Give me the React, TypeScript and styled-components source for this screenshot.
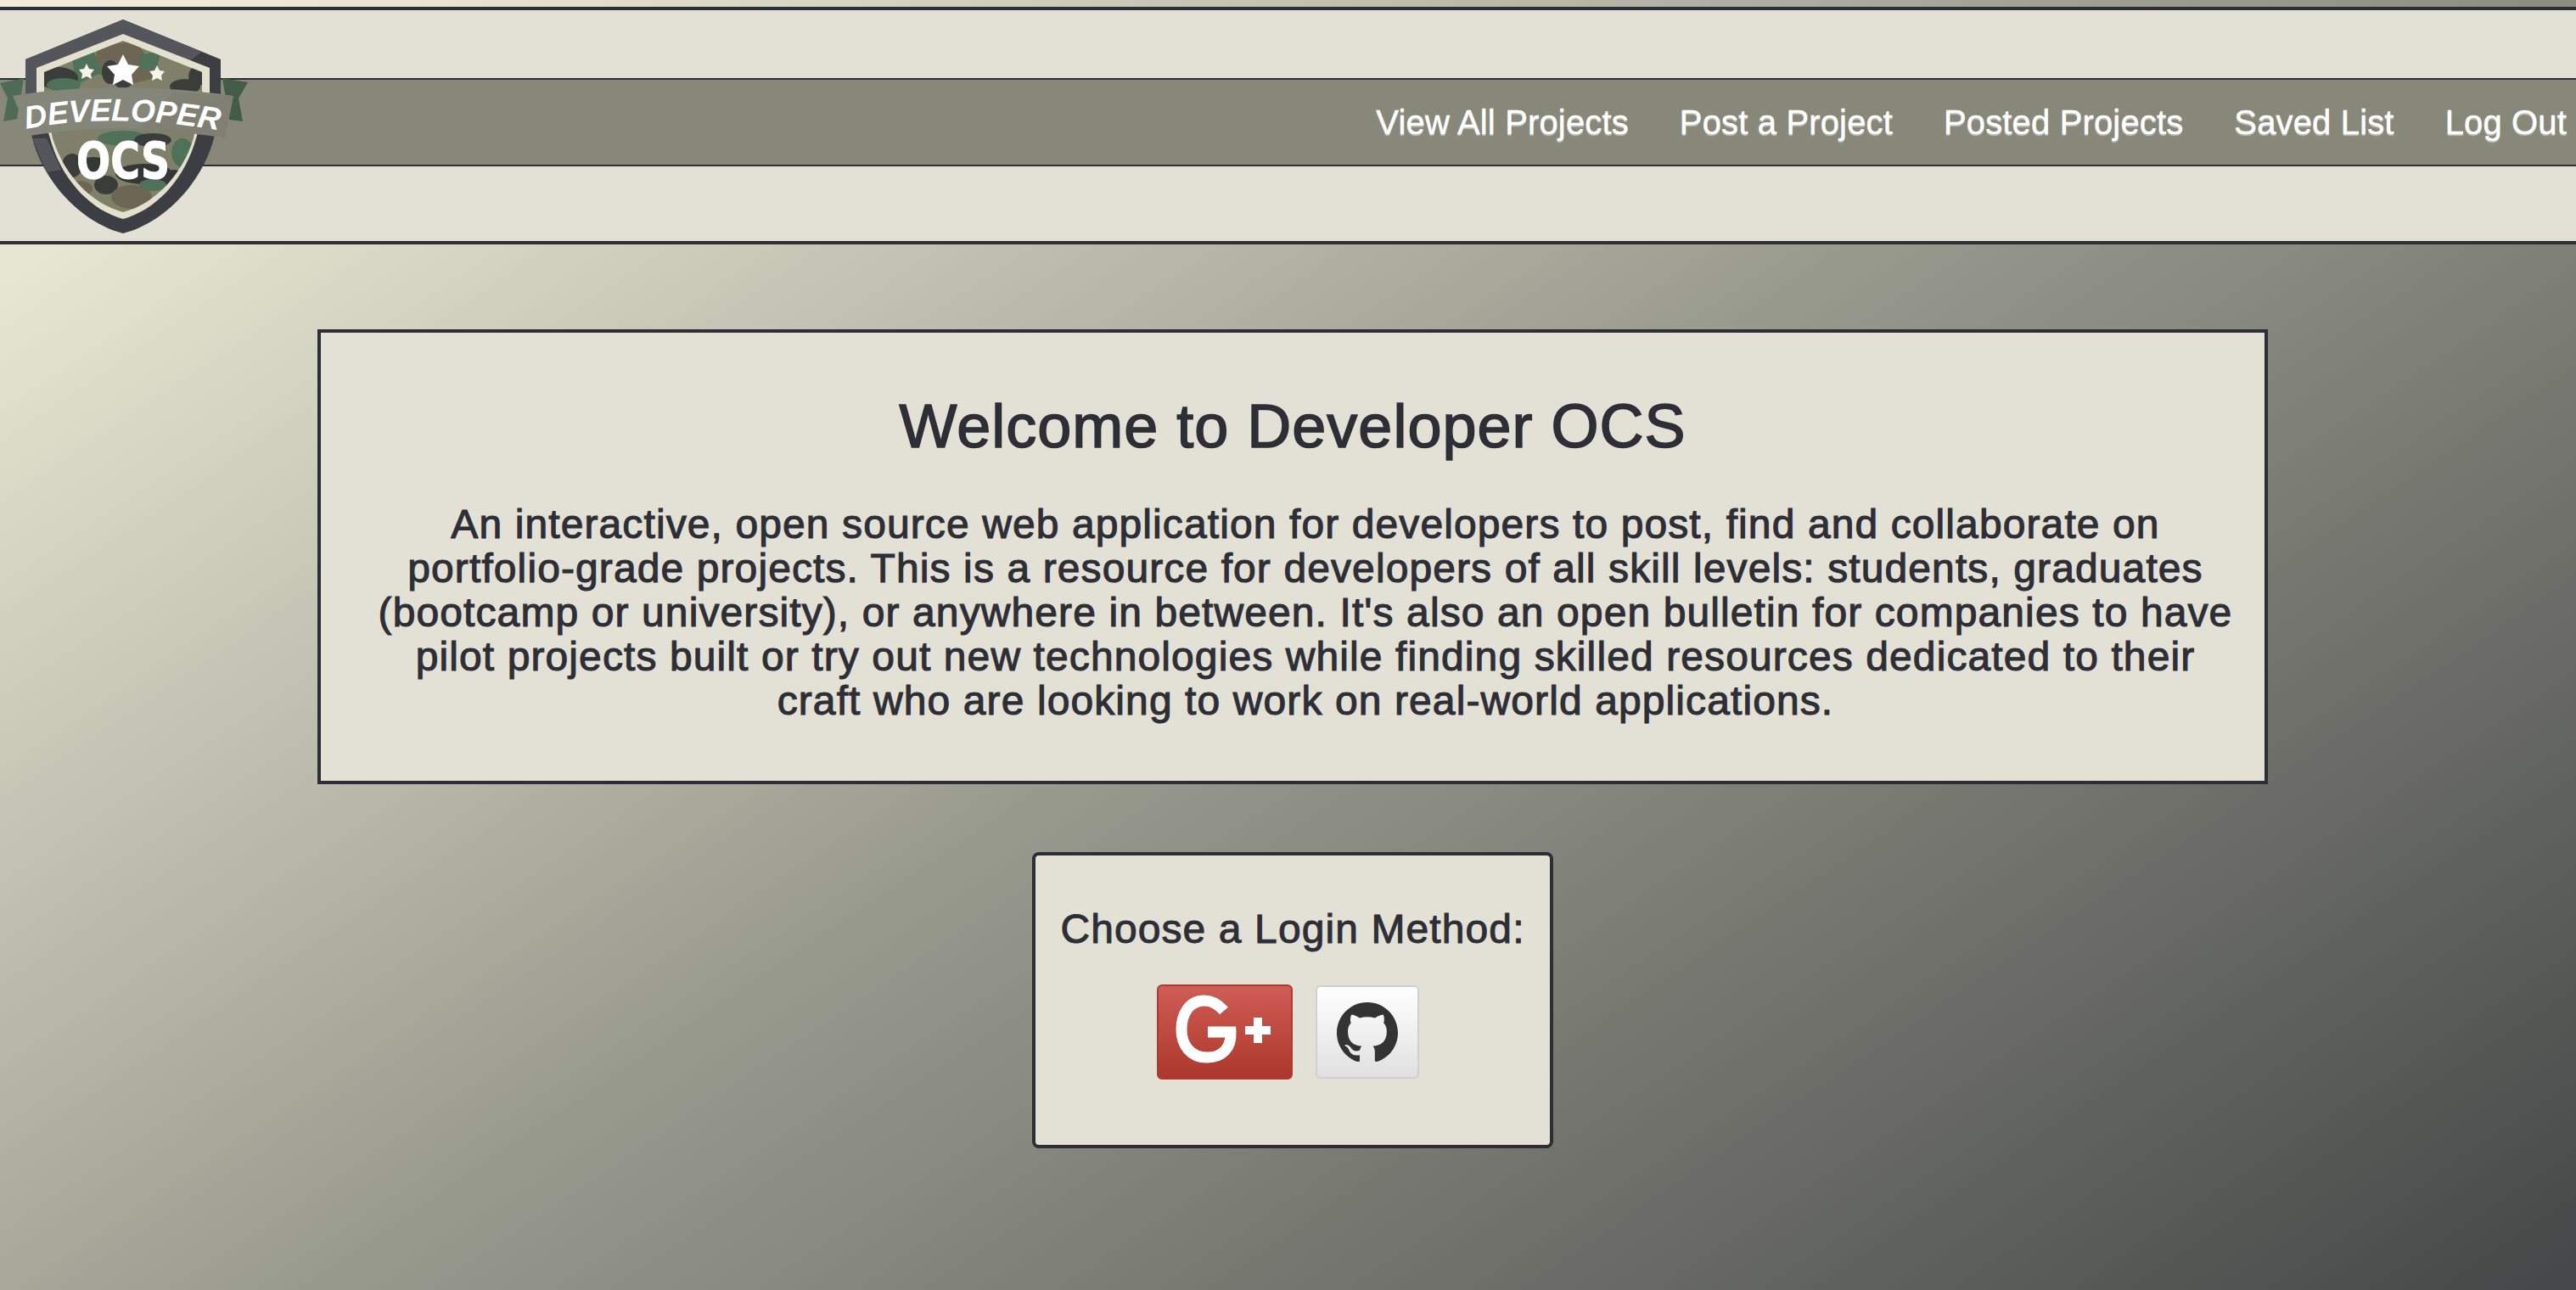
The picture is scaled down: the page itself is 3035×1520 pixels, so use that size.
import styled, { createGlobalStyle } from 'styled-components'
import { SiGithub } from 'react-icons/si'

const GlobalStyle = createGlobalStyle`
  html, body {
    margin: 0;
    padding: 0;
  }

  body {
    width: 3035px;
    height: 1520px;
    overflow: hidden;
    font-family: 'Liberation Sans', Arial, sans-serif;
    color: #2d2e36;
    background: linear-gradient(146deg, #eeeddb 0%, #e6e6d2 9.4%, #b0b1a2 38%, #9a9b8f 49%, #7a7b73 68%, #454748 100%);
  }
`

const Page = styled.div`
  position: relative;
  padding-top: 8px;
`

// top bar, the green band runs through it a little above the middle
const Header = styled.header`
  height: 280px;
  box-sizing: border-box;
  background-color: #e3e0d5;
  border-top: 4px solid #2d2e36;
  border-bottom: 4px solid #2d2e36;
  padding-top: 80px;
`

const Nav = styled.nav`
  height: 104px;
  box-sizing: border-box;
  background-color: #87887a;
  border-top: 2px solid #2d2e36;
  border-bottom: 2px solid #2d2e36;
  padding-right: 11px;
  display: flex;
  align-items: center;
  justify-content: flex-end;
  gap: 60px;
`

const NavLink = styled.a`
  color: #ffffff;
  font-size: 40px;
  line-height: 48px;
  letter-spacing: 0.15px;
  -webkit-text-stroke: 0.4px #ffffff;
  text-shadow: 0 2px 1px rgba(255, 255, 255, 0.45);
  cursor: pointer;
`

// sits over the header, overlapping the band
const LogoWrap = styled.div`
  position: absolute;
  top: 0;
  left: 0;
  width: 300px;
  height: 290px;
`

const Main = styled.main`
  display: flex;
  flex-direction: column;
  align-items: center;
  padding: 100px 0 0 11px;
`

const WelcomeBox = styled.section`
  width: 2298px;
  height: 536px;
  box-sizing: border-box;
  background-color: #e3e0d5;
  border: 4px solid #2d2e36;
  padding: 68px 0 0;
  text-align: center;
`

const Title = styled.h1`
  margin: 0 0 48px;
  font-size: 72px;
  line-height: 84px;
  font-weight: 400;
  letter-spacing: 1px;
  -webkit-text-stroke: 1.6px #2d2e36;
`

// the paragraph sits a bit right of the box centre in the original
const Intro = styled.p`
  margin: 0;
  padding: 0 37px 0 67px;
  font-size: 48px;
  line-height: 52px;
  letter-spacing: 1.1px;
  -webkit-text-stroke: 1.1px #2d2e36;
`

const LoginBox = styled.section`
  margin-top: 80px;
  width: 614px;
  height: 349px;
  box-sizing: border-box;
  background-color: #e3e0d5;
  border: 4px solid #2d2e36;
  border-radius: 8px;
  padding-top: 58px;
  display: flex;
  flex-direction: column;
  align-items: center;
`

const LoginTitle = styled.h2`
  margin: 0 0 36px;
  font-size: 48px;
  line-height: 58px;
  font-weight: 400;
  letter-spacing: 1.1px;
  white-space: nowrap;
  -webkit-text-stroke: 1px #2d2e36;
`

const LoginButtons = styled.div`
  display: flex;
  align-items: center;
  gap: 27px;
  padding-right: 12px;
`

const GoogleButton = styled.button`
  width: 160px;
  height: 112px;
  padding: 0;
  box-sizing: border-box;
  border: 2px solid #ad3a30;
  border-radius: 6px;
  background: linear-gradient(to bottom, #ce5d55, #ad372c);
  cursor: pointer;
  display: flex;

  svg {
    display: block;
  }
`

const GithubButton = styled.button`
  width: 122px;
  height: 110px;
  padding: 0;
  box-sizing: border-box;
  border: 2px solid #d0d0d0;
  border-radius: 6px;
  background: linear-gradient(to bottom, #ffffff, #e0e0e0);
  color: #333333;
  cursor: pointer;
  display: flex;
  align-items: center;
  justify-content: center;
`

const Logo = () => (
  <svg width="300" height="290" viewBox="0 0 300 290">
    <defs>
      <clipPath id="camoClip">
        <path d="M145 48 L238 85 L238 112 L228 163 C214 207 182 240 145 250 C108 240 76 207 62 163 L52 112 L52 85 Z" />
      </clipPath>
    </defs>
    {/* ribbon tails */}
    <path d="M0 98 L28 92 L20 140 L4 143 L9 116 Z" fill="#4d6b55" />
    <path d="M262 92 L292 97 L281 116 L286 143 L270 141 Z" fill="#435c48" />
    {/* shield */}
    <path d="M145 23 L260 70 L260 112 L252 163 C238 215 195 262 145 275 C95 262 52 215 38 163 L30 112 L30 70 Z" fill="#3d3e44" />
    <path d="M145 23 L238 61 L222 73 L145 40 L43 80 L43 112 L30 112 L30 70 Z" fill="#55555c" />
    <path d="M38 163 L55 163 L72 200 L55 203 Z" fill="#55555c" />
    <path d="M145 40 L247 80 L247 112 L231 163 C218 210 185 247 145 258 C105 247 72 210 59 163 L43 112 L43 80 Z" fill="#e3e0cf" />
    <g clipPath="url(#camoClip)">
      <rect x="40" y="40" width="210" height="220" fill="#7f8069" />
      <path d="M115 55 L160 48 L190 90 L150 100 L110 85 Z" fill="#6e6655" />
      <path d="M85 70 L110 60 L120 85 L90 100 Z" fill="#4f7159" />
      <path d="M165 65 L190 60 L185 80 L165 82 Z" fill="#4f7159" />
      <ellipse cx="68" cy="92" rx="24" ry="13" fill="#3a3d3a" />
      <ellipse cx="130" cy="85" rx="10" ry="14" fill="#3a3d3a" />
      <ellipse cx="232" cy="90" rx="10" ry="12" fill="#3a3d3a" />
      <ellipse cx="218" cy="102" rx="18" ry="9" fill="#3a3d3a" />
      <ellipse cx="145" cy="98" rx="10" ry="6" fill="#3a3d3a" />
      <ellipse cx="75" cy="100" rx="20" ry="8" fill="#4f7159" />
      <ellipse cx="145" cy="163" rx="30" ry="9" fill="#4f7159" />
      <ellipse cx="180" cy="165" rx="22" ry="8" fill="#3a3d3a" />
      <ellipse cx="215" cy="180" rx="13" ry="17" fill="#4f7159" />
      <ellipse cx="85" cy="195" rx="12" ry="14" fill="#3a3d3a" />
      <ellipse cx="125" cy="218" rx="14" ry="11" fill="#3a3d3a" />
      <ellipse cx="170" cy="205" rx="34" ry="12" fill="#343735" />
      <ellipse cx="205" cy="212" rx="12" ry="12" fill="#343735" />
      <ellipse cx="110" cy="195" rx="18" ry="10" fill="#343735" />
      <ellipse cx="155" cy="232" rx="24" ry="14" fill="#6e6655" />
      <ellipse cx="180" cy="218" rx="16" ry="7" fill="#4f7159" />
      <ellipse cx="95" cy="222" rx="14" ry="9" fill="#6e6655" />
    </g>
    {/* ribbon */}
    <path d="M15 113 C90 100 190 100 275 113 L265 162 C190 148 105 148 35 160 Z" fill="#85867a" />
    <path d="M205 108 L275 113 L265 162 L165 150 Z" fill="#7f8073" />
    {/* stars */}
    <polygon points="145,64 151,76 164,78 155,88 157,100 145,94 133,100 135,88 126,78 139,76" fill="#ffffff" />
    <polygon points="102,75 105,81 111,82 107,87 108,93 102,90 96,93 97,87 93,82 99,81" fill="#f5f4ea" />
    <polygon points="185,77 188,83 194,84 190,89 191,95 185,92 179,95 180,89 176,84 182,83" fill="#f5f4ea" />
    <path id="devArc" d="M31 152 C100 138 190 138 290 160" fill="none" />
    <text fontFamily="'Liberation Sans', sans-serif" fontWeight="700" fontStyle="italic" fontSize="37" fill="#ffffff">
      <textPath href="#devArc">DEVELOPER</textPath>
    </text>
    <text x="90" y="210" fontFamily="'DejaVu Sans', sans-serif" fontWeight="700" fontSize="59" fill="#ffffff" stroke="#ffffff" strokeWidth="1" textLength="110" lengthAdjust="spacingAndGlyphs">OCS</text>
  </svg>
)

const GoogleGlyph = () => (
  <svg width="156" height="108" viewBox="0 0 156 108">
    <path d="M77 29 C70 21 62 17 54 17 C36 17 27 33 27 51 C27 70 38 84 57 84 C75 84 86 73 85 54 L58 54" fill="none" stroke="#ffffff" strokeWidth="13" />
    <path d="M112 37 h10 v10 h10 v10 h-10 v10 h-10 v-10 h-10 v-10 h10 Z" fill="#ffffff" />
  </svg>
)

const App = () => {
  return (
    <Page>
      <GlobalStyle />
      <Header>
        <Nav>
          <NavLink>View All Projects</NavLink>
          <NavLink>Post a Project</NavLink>
          <NavLink>Posted Projects</NavLink>
          <NavLink>Saved List</NavLink>
          <NavLink>Log Out</NavLink>
        </Nav>
      </Header>
      <LogoWrap>
        <Logo />
      </LogoWrap>
      <Main>
        <WelcomeBox>
          <Title>Welcome to Developer OCS</Title>
          <Intro>
            An interactive, open source web application for developers to post, find and collaborate on portfolio-grade projects. This is a resource for developers of all skill levels: students, graduates (bootcamp or university), or anywhere in between. It's also an open bulletin for companies to have pilot projects built or try out new technologies while finding skilled resources dedicated to their craft who are looking to work on real-world applications.
          </Intro>
        </WelcomeBox>
        <LoginBox>
          <LoginTitle>Choose a Login Method:</LoginTitle>
          <LoginButtons>
            <GoogleButton aria-label="Google Plus">
              <GoogleGlyph />
            </GoogleButton>
            <GithubButton aria-label="GitHub">
              <SiGithub size={72} />
            </GithubButton>
          </LoginButtons>
        </LoginBox>
      </Main>
    </Page>
  )
}

export default App
